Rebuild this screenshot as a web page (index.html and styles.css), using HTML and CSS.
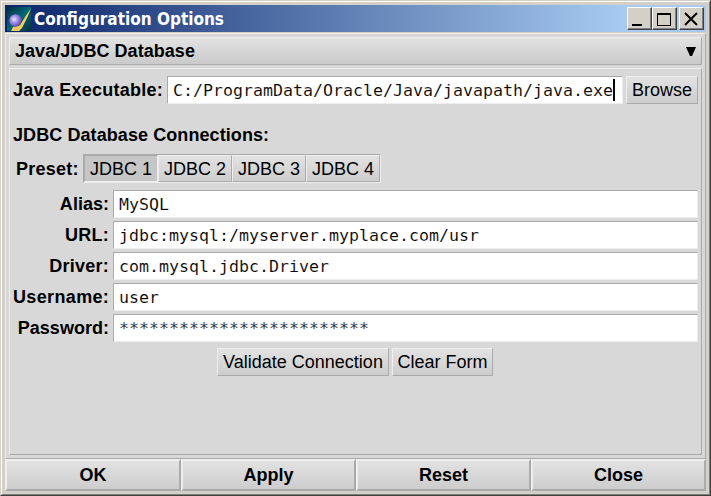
FILE: index.html
```html
<!DOCTYPE html>
<html lang="en">
<head>
<meta charset="utf-8">
<title>Configuration Options</title>
<link rel="stylesheet" href="styles.css">
</head>
<body>
<div class="window">
  <div class="frame">
    <header class="titlebar">
      <svg class="app-icon" width="24" height="24" viewBox="0 0 24 24">
        <defs>
          <linearGradient id="sky" x1="0" y1="0" x2="1" y2="1"><stop offset="0" stop-color="#002c40"/><stop offset=".5" stop-color="#006878"/><stop offset="1" stop-color="#003040"/></linearGradient>
          <radialGradient id="orb" cx=".4" cy=".4" r=".65"><stop offset="0" stop-color="#e8e4ff"/><stop offset=".4" stop-color="#a898e8"/><stop offset="1" stop-color="#5040a0"/></radialGradient>
        </defs>
        <rect width="24" height="24" fill="url(#sky)"/>
        <path d="M24 1L21 9L15 21L12 24H4L6 20L13 18L18 10Z" fill="#f5c860"/>
        <circle cx="8.5" cy="13.5" r="6.2" fill="url(#orb)"/>
      </svg>
      <span class="title">Configuration Options</span>
      <div class="controls">
        <span class="control"><svg width="23" height="21"><path d="M4 16h10v2H4z"/></svg></span>
        <span class="control maximize"><svg width="23" height="21"><path fill-rule="evenodd" d="M4 5h14v13H4zM5 7v10h12V7z"/></svg></span>
        <span class="control"><svg width="23" height="21"><path d="M5 5L17 17M17 5L5 17" stroke="#000" stroke-width="2"/></svg></span>
      </div>
    </header>
    <main class="content">
      <div class="category"><span class="w-category">Java/JDBC Database</span><svg width="10" height="10"><path d="M0 1H10L6 10H4Z"/></svg></div>
      <section class="panel">
        <div class="java-row"><label class="w-java">Java Executable:</label><div class="field">C:/ProgramData/Oracle/Java/javapath/java.exe<i class="caret"></i></div><button class="browse">Browse</button></div>
        <h2><span class="w-heading">JDBC Database Connections:</span></h2>
        <div class="preset-row"><label>Preset:</label><div class="presets"><button class="selected">JDBC 1</button><button>JDBC 2</button><button>JDBC 3</button><button>JDBC 4</button></div></div>
        <div class="form">
          <label class="tight">Alias:</label><div class="field">MySQL</div>
          <label>URL:</label><div class="field">jdbc:mysql:/myserver.myplace.com/usr</div>
          <label>Driver:</label><div class="field">com.mysql.jdbc.Driver</div>
          <label class="w-user">Username:</label><div class="field">user</div>
          <label class="tight">Password:</label><div class="field">*************************</div>
        </div>
        <div class="actions"><button class="validate">Validate Connection</button><button class="clear">Clear Form</button></div>
      </section>
    </main>
    <footer class="footer"><button>OK</button><button>Apply</button><button>Reset</button><button>Close</button></footer>
  </div>
</div>
</body>
</html>
```
FILE: styles.css
```css
* { box-sizing: border-box; }
body { margin: 0; font: bold 18px/26px "Liberation Sans", Arial, sans-serif; color: #000; }
.window { width: 711px; height: 496px; background: #d4d0c8; border: 1px solid; border-color: #d4d0c8 #404040 #404040 #d4d0c8; }
.frame { height: 494px; border: 1px solid; border-color: #fff #808080 #808080 #fff; padding: 3px; }
.titlebar { display: flex; align-items: center; height: 27px; width: 701px; padding: 0 2px; background: linear-gradient(90deg, #0a246a, #a6caf0 88%); color: #fff; }
.app-icon { flex: none; }
.title { margin-left: 3px; padding-top: 1px; font: bold 17px/26px "DejaVu Sans Condensed", "DejaVu Sans", sans-serif; font-stretch: condensed; white-space: nowrap; }
.controls { display: flex; margin-left: auto; height: 23px; }
.control { width: 25px; height: 23px; background: #d4d0c8; border: 1px solid; border-color: #fff #404040 #404040 #fff; box-shadow: inset -1px -1px #808080; overflow: hidden; }
.control svg { display: block; }
.maximize { margin-right: 2px; }
.content { margin-top: 1px; width: 701px; height: 426px; padding: 3px; background: #d8d8d8; border: 1px solid; border-color: #eee #aaa #aaa #eee; }
.category { display: flex; align-items: center; justify-content: space-between; height: 28px; padding: 0 5px; background: linear-gradient(#e2e2e2, #cacaca); border: 1px solid; border-color: #eee #aaa #aaa #eee; }
.panel { margin-top: 3px; height: 387px; border: 1px solid; border-color: #eee #aaa #aaa #eee; padding: 7px 3px; }
button { margin: 0; padding: 0; height: 28px; font: 18px/26px "Liberation Sans", Arial, sans-serif; color: #000; text-align: center; white-space: nowrap; background: linear-gradient(#e2e2e2, #cdcdcd); border: 1px solid; border-color: #eee #aaa #aaa #eee; border-radius: 0; }
.field { height: 28px; padding: 1px 0 0 5px; background: #fff; border: 1px solid; border-color: #aaa #eee #eee #aaa; font: 16.61px/26px "DejaVu Sans Mono", monospace; -webkit-text-stroke: .12px #fff; white-space: pre; overflow: hidden; }
label { white-space: nowrap; letter-spacing: .25px; }
.java-row { display: flex; align-items: center; height: 28px; }
.java-row label { width: 154px; }
.java-row .field { width: 456px; position: relative; }
.caret { position: absolute; right: 7px; top: 2px; width: 2px; height: 22px; background: #000; }
.browse { width: 72px; margin-left: 3px; }
h2 { margin: 18px 0 0; font: inherit; }
.preset-row { display: flex; align-items: center; margin-top: 6px; padding-left: 3px; height: 29px; }
.preset-row label { width: 67px; }
.presets { display: flex; height: 29px; border: 1px solid; border-color: #aaa #eee #eee #aaa; }
.presets button { width: 74px; height: 27px; line-height: 27px; }
.presets .selected { background: #c6c6c6; border-color: #aaa #eee #eee #aaa; }
.form { display: grid; grid-template-columns: 96px 585px; column-gap: 4px; row-gap: 3px; margin-top: 7px; }
.form label { text-align: right; line-height: 28px; }
.form .w-user { letter-spacing: .35px; }
.form .tight { letter-spacing: .02px; }
.actions { display: flex; margin: 6px 0 0 204px; gap: 3px; }
.validate { width: 172px; }
.clear { width: 101px; }
.footer { display: flex; width: 701px; height: 32px; }
.footer button { flex: 0 0 175px; height: 32px; font-weight: bold; border-width: 2px; line-height: 28px; }
.footer button:first-child { flex-basis: 176px; }
.w-category { letter-spacing: .05px; }
.w-java { letter-spacing: .25px; }
.w-heading { letter-spacing: .08px; }
```
